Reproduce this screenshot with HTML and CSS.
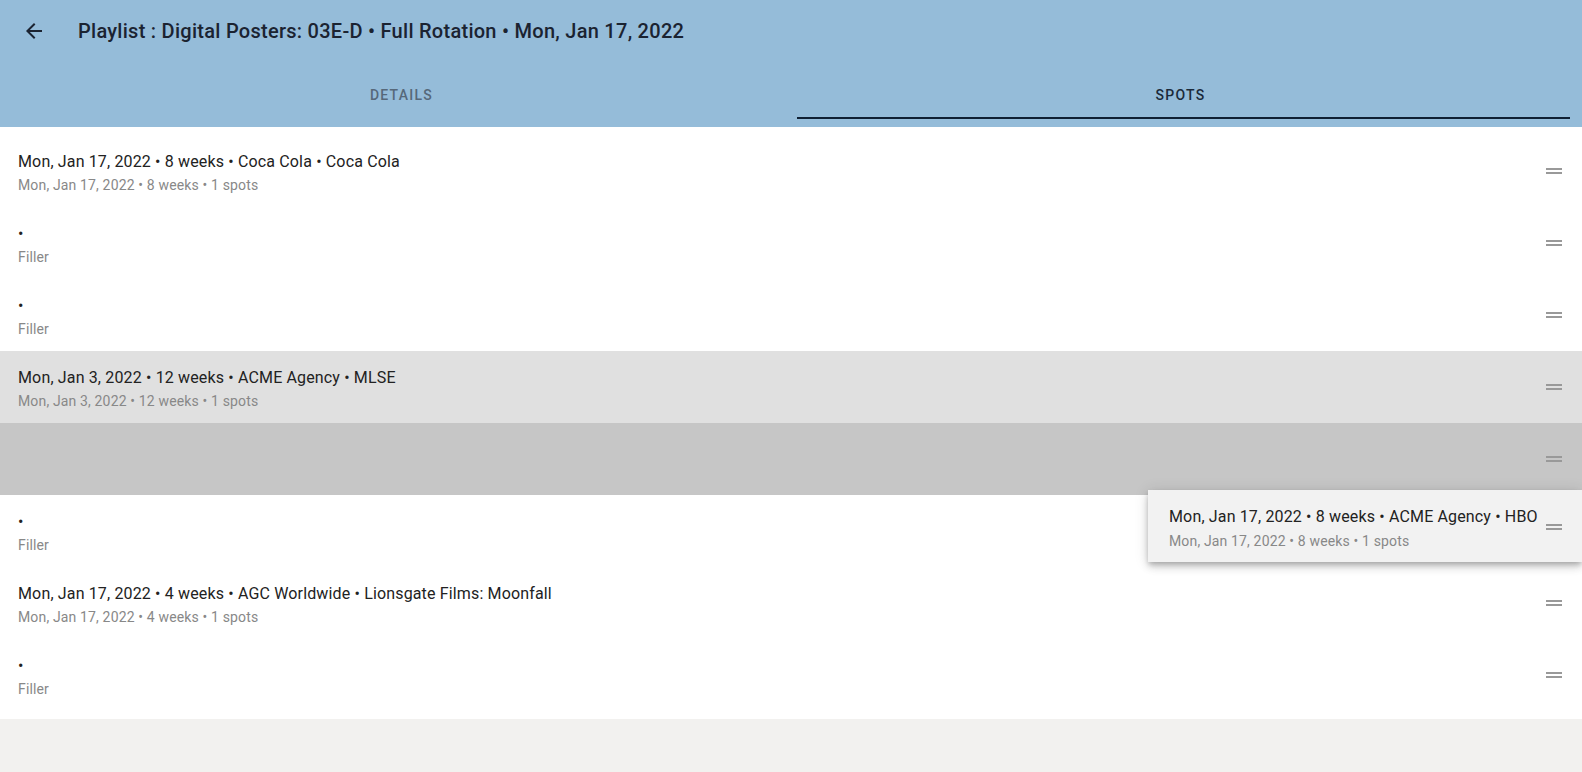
FILE: index.html
```html
<!DOCTYPE html>
<html lang="en">
<head>
    <meta charset="UTF-8">
    <meta name="viewport" content="width=device-width, initial-scale=1.0">
    <title>Playlist Spots</title>
    <link rel="stylesheet" href="styles.css">
</head>
<body>
    <header class="app-bar">
        <div class="toolbar">
            <button class="back-btn" aria-label="back">
                <svg viewBox="0 0 24 24" width="24" height="24"><path d="M20 11H7.83l5.59-5.59L12 4l-8 8 8 8 1.41-1.41L7.83 13H20v-2z"/></svg>
            </button>
            <h1 class="title">Playlist : Digital Posters: 03E-D • Full Rotation • Mon, Jan 17, 2022</h1>
        </div>
        <nav class="tabs">
            <div class="tab">Details</div>
            <div class="tab active">Spots</div>
        </nav>
    </header>

    <main class="content">
        <ul class="spot-list">
            <li class="spot">
                <div class="spot-text">
                    <span class="primary">Mon, Jan 17, 2022 • 8 weeks • Coca Cola • Coca Cola</span>
                    <span class="secondary">Mon, Jan 17, 2022 • 8 weeks • 1 spots</span>
                </div>
                <span class="handle"><svg viewBox="0 0 24 24" width="24" height="24"><path d="M20 9H4v2h16V9zM4 15h16v-2H4v2z"/></svg></span>
            </li>
            <li class="spot">
                <div class="spot-text">
                    <span class="primary">•</span>
                    <span class="secondary">Filler</span>
                </div>
                <span class="handle"><svg viewBox="0 0 24 24" width="24" height="24"><path d="M20 9H4v2h16V9zM4 15h16v-2H4v2z"/></svg></span>
            </li>
            <li class="spot">
                <div class="spot-text">
                    <span class="primary">•</span>
                    <span class="secondary">Filler</span>
                </div>
                <span class="handle"><svg viewBox="0 0 24 24" width="24" height="24"><path d="M20 9H4v2h16V9zM4 15h16v-2H4v2z"/></svg></span>
            </li>
            <li class="spot hover">
                <div class="spot-text">
                    <span class="primary">Mon, Jan 3, 2022 • 12 weeks • ACME Agency • MLSE</span>
                    <span class="secondary">Mon, Jan 3, 2022 • 12 weeks • 1 spots</span>
                </div>
                <span class="handle"><svg viewBox="0 0 24 24" width="24" height="24"><path d="M20 9H4v2h16V9zM4 15h16v-2H4v2z"/></svg></span>
            </li>
            <li class="spot placeholder">
                <div class="spot-text">
                    <span class="primary">&nbsp;</span>
                    <span class="secondary">&nbsp;</span>
                </div>
                <span class="handle"><svg viewBox="0 0 24 24" width="24" height="24"><path d="M20 9H4v2h16V9zM4 15h16v-2H4v2z"/></svg></span>
            </li>
            <li class="spot">
                <div class="spot-text">
                    <span class="primary">•</span>
                    <span class="secondary">Filler</span>
                </div>
                <span class="handle"><svg viewBox="0 0 24 24" width="24" height="24"><path d="M20 9H4v2h16V9zM4 15h16v-2H4v2z"/></svg></span>
            </li>
            <li class="spot">
                <div class="spot-text">
                    <span class="primary">Mon, Jan 17, 2022 • 4 weeks • AGC Worldwide • Lionsgate Films: Moonfall</span>
                    <span class="secondary">Mon, Jan 17, 2022 • 4 weeks • 1 spots</span>
                </div>
                <span class="handle"><svg viewBox="0 0 24 24" width="24" height="24"><path d="M20 9H4v2h16V9zM4 15h16v-2H4v2z"/></svg></span>
            </li>
            <li class="spot">
                <div class="spot-text">
                    <span class="primary">•</span>
                    <span class="secondary">Filler</span>
                </div>
                <span class="handle"><svg viewBox="0 0 24 24" width="24" height="24"><path d="M20 9H4v2h16V9zM4 15h16v-2H4v2z"/></svg></span>
            </li>
        </ul>

        <!-- item being dragged -->
        <div class="spot dragging">
            <div class="spot-text">
                <span class="primary">Mon, Jan 17, 2022 • 8 weeks • ACME Agency • HBO</span>
                <span class="secondary">Mon, Jan 17, 2022 • 8 weeks • 1 spots</span>
            </div>
            <span class="handle"><svg viewBox="0 0 24 24" width="24" height="24"><path d="M20 9H4v2h16V9zM4 15h16v-2H4v2z"/></svg></span>
        </div>
    </main>
</body>
</html>
```

FILE: styles.css
```css
body {
    margin: 0;
    font-family: Roboto, "Liberation Sans", sans-serif;
    background: #f2f1ef;
    min-height: 772px;
}

/* 頂部欄 */
.app-bar {
    background: #95bcd9;
    height: 127px;
    color: #1b2331;
}

.toolbar {
    height: 62px;
    display: flex;
    align-items: center;
    padding-left: 22px;
}

.back-btn {
    background: none;
    border: none;
    padding: 0;
    width: 24px;
    height: 24px;
    margin-right: 32px;
    display: flex;
    cursor: pointer;
}

.back-btn svg {
    fill: #1b2331;
}

.title {
    margin: 0;
    font-size: 20px;
    font-weight: 500;
    letter-spacing: 0.27px;
    line-height: 1.6;
}

/* 分頁 */
.tabs {
    display: flex;
    margin: 9px 12px 0;
    height: 48px;
}

.tab {
    flex: 1;
    display: flex;
    align-items: center;
    justify-content: center;
    font-size: 14px;
    font-weight: 500;
    letter-spacing: 1.25px;
    text-transform: uppercase;
    color: #56687a;
    position: relative;
}

.tab.active {
    color: #1b2a3a;
}

/* 分頁指示線 */
.tab.active::after {
    content: '';
    position: absolute;
    left: 6px;
    right: 0;
    bottom: 0;
    height: 2px;
    background: #0f2033;
}

/* 清單 */
.content {
    position: relative;
}

.spot-list {
    list-style: none;
    margin: 0;
    padding: 8px 0;
    background: #fff;
}

.spot {
    display: flex;
    align-items: center;
    height: 72px;
    padding: 0 16px 0 18px;
    box-sizing: border-box;
}

.spot.hover {
    background: #e0e0e0;
}

.spot.placeholder {
    background: #c6c6c6;
}

.spot-text {
    flex: 1;
    display: flex;
    flex-direction: column;
    margin: 8px 0 6px;
    min-width: 0;
}

.primary {
    font-size: 16px;
    line-height: 24px;
    letter-spacing: 0.15px;
    color: #222;
}

.secondary {
    font-size: 14px;
    line-height: 20px;
    letter-spacing: 0.15px;
    color: #888;
    margin-top: 1px;
}

.handle {
    width: 24px;
    height: 24px;
    display: flex;
    margin-left: 8px;
}

.handle svg {
    fill: #999;
}

.spot.dragging {
    position: absolute;
    top: 363px;
    left: 1148px;
    width: 434px;
    padding: 0 16px 0 21px;
    background: #f2f2f2;
    box-shadow: 0 3px 5px -1px rgba(0, 0, 0, 0.2), 0 5px 8px 0 rgba(0, 0, 0, 0.14), 0 1px 14px 0 rgba(0, 0, 0, 0.12);
}

.spot.dragging .spot-text {
    margin: 10px 0 6px;
}

.spot.dragging .secondary {
    margin-top: 2px;
}

.spot.dragging .handle {
    margin-left: 4px;
    margin-top: 2px;
}
```
